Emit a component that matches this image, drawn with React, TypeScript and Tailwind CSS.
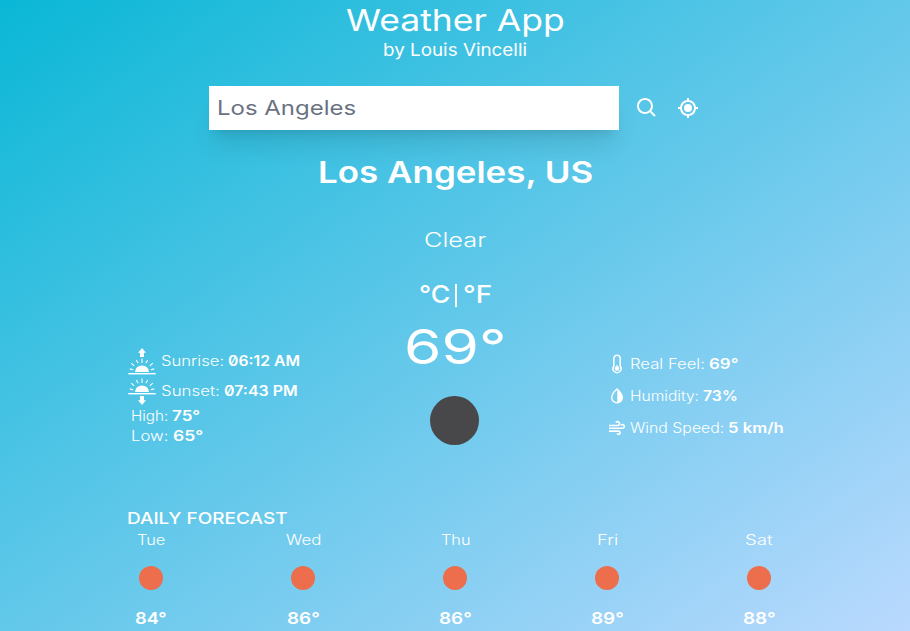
import { useLayoutEffect, useRef, type ReactNode } from "react";
import { BiSearch, BiCurrentLocation } from "react-icons/bi";

/* Stretches its text horizontally so that it fills the width set by className. */
function Wide({ className, children }: { className: string; children: ReactNode }) {
  const outer = useRef<HTMLSpanElement>(null);
  const inner = useRef<HTMLSpanElement>(null);
  useLayoutEffect(() => {
    const fit = () => {
      if (!outer.current || !inner.current) return;
      const scale = outer.current.offsetWidth / inner.current.offsetWidth;
      inner.current.style.transform = `scaleX(${scale})`;
    };
    fit();
    document.fonts.ready.then(fit);
  }, []);
  return (
    <span ref={outer} className={`block shrink-0 text-left ${className}`}>
      <span ref={inner} className="inline-block origin-left whitespace-nowrap">
        {children}
      </span>
    </span>
  );
}

function Sun({ setting = false }: { setting?: boolean }) {
  return (
    <svg width="28" height="28" viewBox="0 0 28 28" fill="white" stroke="none" className="block shrink-0">
      <g transform={setting ? "translate(0 -9)" : undefined}>
        <path d="M7 24a7 6.600 0 0 1 14 0z" />
        <path
          d="M14 10.500v4.500M8.300 12l1.900 3.200M19.700 12l-1.900 3.200M3.200 15.200l3 2.600M24.800 15.200l-3 2.600M1.800 20.900l3.400.8M26.200 20.900l-3.400.8"
          stroke="white"
          strokeWidth="1.100"
        />
        <path d="M.3 25h27.400v1.400H.3z" />
      </g>
      {setting ? (
        <path d="M12 19h4v4.200h2L14 28l-4-4.800h2z" />
      ) : (
        <path d="M14 0l4 4.800h-2V9h-4V4.800h-2z" />
      )}
    </svg>
  );
}

function Thermometer() {
  return (
    <svg width="18" height="20" viewBox="0 0 18 20" fill="none" stroke="white" strokeWidth="1.500" className="block">
      <path d="M5.800 12.200V4.500a3.200 3.200 0 0 1 6.400 0v7.700a4 4 0 1 1-6.400 0z" />
      <circle cx="9" cy="14.500" r="2.300" fill="white" stroke="none" />
      <path d="M9 11v3" strokeWidth="1.200" />
    </svg>
  );
}

function Drop() {
  return (
    <svg width="18" height="20" viewBox="0 0 18 20" fill="none" stroke="white" strokeWidth="1.400" className="block">
      <path d="M9 2.900C6.200 5.400 3.700 8.300 3.700 11.400a5.300 5.300 0 0 0 10.600 0C14.300 8.300 11.800 5.400 9 2.900z" />
      <path d="M9.300 3.200c2.700 2.400 5 5.200 5 8.200a5.200 5.200 0 0 1-5 5.200z" fill="white" stroke="none" />
    </svg>
  );
}

function Wind() {
  return (
    <svg width="18" height="20" viewBox="0 0 18 20" fill="none" stroke="white" strokeWidth="1.600" className="block">
      <path d="M1 7.500h8.600a1.900 1.900 0 1 0-1.700-2.800M1 10.300h13.600a1.900 1.900 0 1 0-1.800-2.800M1 13.100h9.600a1.600 1.600 0 1 1-1.500 2.300" />
    </svg>
  );
}

const days = [
  { day: "Tue", dayW: "w-[28px]", temp: "84°", tempW: "w-[32px]" },
  { day: "Wed", dayW: "w-[35px]", temp: "86°", tempW: "w-[33px]" },
  { day: "Thu", dayW: "w-[29px]", temp: "86°", tempW: "w-[33px]" },
  { day: "Fri", dayW: "w-[21px]", temp: "89°", tempW: "w-[33px]" },
  { day: "Sat", dayW: "w-[28px]", temp: "88°", tempW: "w-[33px]" },
];

export default function App() {
  return (
    <div className="h-[631px] w-[910px] overflow-hidden bg-[linear-gradient(to_bottom_right,#0ab7d6,#bad9fe)] font-[Inter,sans-serif] text-white">
      <header className="flex flex-col items-center">
        <h1 className="text-[30px] leading-10"><Wide className="w-[219px]">Weather App</Wide></h1>
        <p className="text-[17px] leading-5"><Wide className="w-[144px]">by Louis Vincelli</Wide></p>
      </header>

      <div className="mt-[26px] ml-[209px] flex h-11 items-center">
        <div className="flex h-11 w-[410px] items-center bg-white px-2 text-xl text-gray-500 shadow-xl">
          <Wide className="w-[139px]">Los Angeles</Wide>
        </div>
        <BiSearch className="ml-4 h-6 w-6" />
        <BiCurrentLocation className="ml-[17px] h-6 w-6" />
      </div>

      <section className="mt-6 flex flex-col items-center">
        <h2 className="text-[30px] leading-9 font-semibold"><Wide className="w-[275px]">Los Angeles, US</Wide></h2>
        <p className="mt-9 text-xl leading-[29px] font-light"><Wide className="w-[62px]">Clear</Wide></p>
      </section>

      <div className="mt-6 flex h-8 items-center justify-center text-2xl leading-8 font-medium">
        <Wide className="w-[31px]">°C</Wide>
        <span className="ml-[5px] h-[23px] w-[2px] bg-white" />
        <Wide className="ml-[6px] w-[29px]">°F</Wide>
      </div>

      <main className="ml-[128px] flex h-[135px] w-[660px] pt-[11px]">
        <section className="w-[263px] shrink-0 pt-[26px] text-sm leading-5">
          <div className="flex h-7">
            <Sun />
            <div className="flex pt-[3px]">
              <Wide className="ml-[5px] w-[63px] font-light">Sunrise:</Wide>
              <Wide className="ml-1 w-[72px] font-semibold [font-feature-settings:'zero']">06:12 AM</Wide>
            </div>
          </div>
          <div className="mt-px flex h-7 items-center">
            <Sun setting />
            <Wide className="ml-[5px] w-[59px] font-light">Sunset:</Wide>
            <Wide className="ml-1 w-[74px] font-semibold [font-feature-settings:'zero']">07:43 PM</Wide>
          </div>
          <div className="mt-px ml-[3px] flex">
            <Wide className="w-[37px] font-light">High:</Wide>
            <Wide className="ml-1 w-[28px] font-semibold">75°</Wide>
          </div>
          <div className="ml-[3px] flex">
            <Wide className="w-[37px] font-light">Low:</Wide>
            <Wide className="ml-[5px] w-[30px] font-semibold">65°</Wide>
          </div>
        </section>

        <section className="flex w-[127px] shrink-0 flex-col items-center">
          <p className="text-[48px] leading-[50px]"><Wide className="w-[102px]">69°</Wide></p>
          <div className="mt-6 size-[49px] shrink-0 rounded-full bg-[#48484a]" />
        </section>

        <section className="flex flex-col gap-3 pt-8 pl-[90px] text-sm leading-5">
          <div className="flex">
            <Thermometer />
            <Wide className="ml-1 w-[75px] font-light">Real Feel:</Wide>
            <Wide className="ml-1 w-[29px] font-semibold">69°</Wide>
          </div>
          <div className="flex">
            <Drop />
            <Wide className="ml-1 w-[69px] font-light">Humidity:</Wide>
            <Wide className="ml-1 w-[35px] font-semibold">73%</Wide>
          </div>
          <div className="flex">
            <Wind />
            <Wide className="ml-1 w-[94px] font-light">Wind Speed:</Wide>
            <Wide className="ml-1 w-[56px] font-semibold">5 km/h</Wide>
          </div>
        </section>
      </main>

      <section className="mt-[60px] ml-[127px]">
        <h3 className="text-base leading-6 font-medium"><Wide className="w-[160px]">DAILY FORECAST</Wide></h3>
        <div className="-ml-[52px] flex">
          {days.map((d) => (
            <div key={d.day} className="flex w-[152px] shrink-0 flex-col items-center">
              <span className="text-sm leading-5 font-light"><Wide className={d.dayW}>{d.day}</Wide></span>
              <span className="mt-4 size-6 rounded-full bg-[#ec6e4c]" />
              <span className="mt-[18px] text-base leading-5 font-semibold"><Wide className={d.tempW}>{d.temp}</Wide></span>
            </div>
          ))}
        </div>
      </section>
    </div>
  );
}
